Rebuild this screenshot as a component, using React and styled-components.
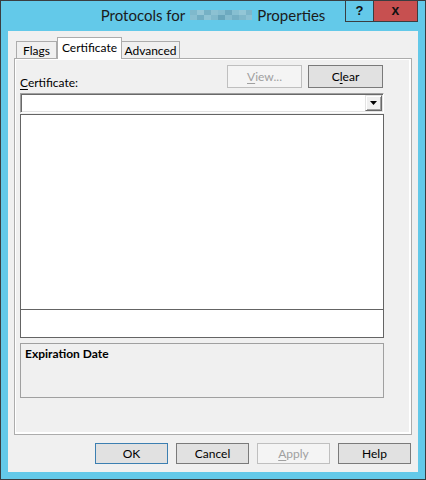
import React from "react";
import styled, { createGlobalStyle } from "styled-components";

const GlobalStyle = createGlobalStyle`
  html, body {
    margin: 0;
    padding: 0;
    background: #ffffff;
  }
  * {
    box-sizing: border-box;
  }
`;

// blurred name in the caption, drawn as a pixel mosaic
const MOSAIC = [
  ["#7fb9cc", "#94c6d6", "#76b1c5", "#8cc1d2", "#84bccf", "#6eaac0", "#87bfd1", "#93c6d6", "#7cb6ca"],
  ["#88bfd1", "#72aec3", "#8ec3d4", "#80b9cc", "#68a5bb", "#83bbce", "#74afc4", "#7fb8cb", "#8bc1d3"],
];

function App() {
  return (
    <>
      <GlobalStyle />
      <Window>
        <TitleBar>
          <Title>
            <span>Protocols for</span>
            <svg width="62" height="10" viewBox="0 0 62 10" aria-hidden="true">
              {MOSAIC.map((row, r) =>
                row.map((c, i) => (
                  <rect key={r + "-" + i} x={i * 7} y={r * 5} width="7" height="5" fill={c} />
                ))
              )}
            </svg>
            <span>Properties</span>
          </Title>
          <Controls>
            <CaptionButton>?</CaptionButton>
            <CaptionButton $close>x</CaptionButton>
          </Controls>
        </TitleBar>

        <Client>
          <TabStrip>
            <Tab $w={41}>Flags</Tab>
            <Tab $w={65} $active>Certificate</Tab>
            <Tab $w={59} $overlap>Advanced</Tab>
          </TabStrip>

          <Panel>
            <Page>
              <TopRow>
                <FieldLabel>
                  <Key>C</Key>ertificate:
                </FieldLabel>
                <ButtonGroup>
                  <DialogButton $w={75} $h={23} disabled>
                    <Key>V</Key>iew...
                  </DialogButton>
                  <DialogButton $w={75} $h={23}>
                    C<Key>l</Key>ear
                  </DialogButton>
                </ButtonGroup>
              </TopRow>

              <Combo>
                <DropButton>
                  <svg width="7" height="4" viewBox="0 0 7 4" aria-hidden="true">
                    <path d="M0 0 H7 L3.5 4 Z" fill="#000" />
                  </svg>
                </DropButton>
              </Combo>

              <ListBox>
                <ListArea />
                <ListFooter />
              </ListBox>

              <Group>
                <GroupTitle>Expiration Date</GroupTitle>
              </Group>
            </Page>
          </Panel>

          <Footer>
            <DialogButton $w={73} $h={21} $default>OK</DialogButton>
            <DialogButton $w={73} $h={21}>Cancel</DialogButton>
            <DialogButton $w={73} $h={21} disabled>
              <Key>A</Key>pply
            </DialogButton>
            <DialogButton $w={73} $h={21}>Help</DialogButton>
          </Footer>
        </Client>
      </Window>
    </>
  );
}

export default App;

// ================= STYLED COMPONENTS =================

const Window = styled.div`
  width: 426px;
  height: 480px;
  border: 1px solid #3a3d40;
  background: #63c9e9;
  display: flex;
  flex-direction: column;
  font-family: Lato, "Liberation Sans", sans-serif;
  font-size: 12px;
  color: #000;
`;

const TitleBar = styled.div`
  height: 30px;
  display: grid;
  grid-template-columns: 1fr auto 1fr;
  align-items: start;
`;

const Title = styled.div`
  grid-column: 2;
  height: 30px;
  padding-bottom: 2px;
  display: flex;
  align-items: center;
  gap: 5px;
  font-size: 15px;
  font-weight: 400;
  color: #1b1b1b;
  white-space: nowrap;
`;

const Controls = styled.div`
  grid-column: 3;
  justify-self: end;
  margin-right: 7px;
  display: flex;
`;

const CaptionButton = styled.div`
  width: ${(p) => (p.$close ? 45 : 29)}px;
  height: 21px;
  margin-left: ${(p) => (p.$close ? -1 : 0)}px;
  border: 1px solid #3a3d40;
  border-top: none;
  background: ${(p) => (p.$close ? "#c75050" : "transparent")};
  display: flex;
  align-items: center;
  justify-content: center;
  font-family: "Liberation Sans", Arial, sans-serif;
  font-weight: bold;
  font-size: ${(p) => (p.$close ? 14 : 13)}px;
  color: #111;
  padding-bottom: 2px;
`;

const Client = styled.div`
  flex: 1;
  margin: 0 7px 7px;
  background: #f0f0f0;
  padding: 6px 6px 8px 6px;
  display: flex;
  flex-direction: column;
`;

const TabStrip = styled.div`
  height: 21px;
  padding-left: 2px;
  display: flex;
  align-items: flex-end;
  position: relative;
  z-index: 1;
`;

const Tab = styled.div`
  width: ${(p) => p.$w}px;
  height: ${(p) => (p.$active ? 22 : 17)}px;
  margin-bottom: ${(p) => (p.$active ? -1 : 0)}px;
  margin-left: ${(p) => (p.$overlap ? -1 : 0)}px;
  padding-bottom: ${(p) => (p.$active ? 2 : 0)}px;
  border: 1px solid #acacac;
  border-bottom: none;
  background: ${(p) => (p.$active ? "#ffffff" : "#f0f0f0")};
  display: flex;
  align-items: center;
  justify-content: center;
  white-space: nowrap;
`;

const Panel = styled.div`
  height: 377px;
  border: 1px solid #acacac;
  background: #ffffff;
  padding: 1px 2px 2px 1px;
`;

const Page = styled.div`
  height: 100%;
  background: #f0f0f0;
  padding: 5px 0 0 4px;
  display: flex;
  flex-direction: column;
`;

const TopRow = styled.div`
  width: 363px;
  display: flex;
  justify-content: space-between;
  align-items: flex-start;
`;

const FieldLabel = styled.div`
  padding-top: 10px;
  line-height: 15px;
`;

const Key = styled.u`
  text-decoration: underline;
  text-underline-offset: 2px;
`;

const ButtonGroup = styled.div`
  display: flex;
  gap: 6px;
`;

const DialogButton = styled.button`
  width: ${(p) => p.$w}px;
  height: ${(p) => p.$h}px;
  padding: 0;
  margin: 0;
  font-family: Lato, "Liberation Sans", sans-serif;
  font-size: 12px;
  color: #000;
  background: #e1e1e1;
  border: 1px solid ${(p) => (p.$default ? "#3c7fb1" : "#7a7a7a")};
  border-radius: 0;
  display: flex;
  align-items: center;
  justify-content: center;

  &:disabled {
    color: #a0a0a0;
    background: #f4f4f4;
    border-color: #bfbfbf;
  }
`;

const Combo = styled.div`
  width: 364px;
  height: 20px;
  margin-top: 3px;
  background: #ffffff;
  border-top: 1px solid #a0a0a0;
  border-left: 1px solid #a0a0a0;
  border-right: 1px solid #ffffff;
  border-bottom: 1px solid #ffffff;
  box-shadow: inset 1px 1px 0 #696969, inset -1px -1px 0 #e3e3e3;
  display: flex;
  justify-content: flex-end;
  align-items: center;
  padding-right: 1px;
`;

const DropButton = styled.div`
  width: 17px;
  height: 16px;
  background: #f0f0f0;
  border-top: 1px solid #e3e3e3;
  border-left: 1px solid #e3e3e3;
  border-right: 1px solid #696969;
  border-bottom: 1px solid #696969;
  box-shadow: inset 1px 1px 0 #ffffff, inset -1px -1px 0 #a0a0a0;
  display: flex;
  align-items: center;
  justify-content: center;
`;

const ListBox = styled.div`
  width: 364px;
  margin-top: 1px;
  border: 1px solid #646464;
  background: #ffffff;
  display: flex;
  flex-direction: column;
`;

const ListArea = styled.div`
  height: 195px;
  border-bottom: 1px solid #646464;
`;

const ListFooter = styled.div`
  height: 27px;
`;

const Group = styled.div`
  width: 364px;
  height: 55px;
  margin-top: 5px;
  border: 1px solid #a0a0a0;
  background: #f0f0f0;
  padding: 2px 4px;
`;

const GroupTitle = styled.div`
  font-weight: bold;
  line-height: 15px;
`;

const Footer = styled.div`
  margin-top: 8px;
  margin-right: 1px;
  display: flex;
  justify-content: flex-end;
  gap: 8px;
`;
